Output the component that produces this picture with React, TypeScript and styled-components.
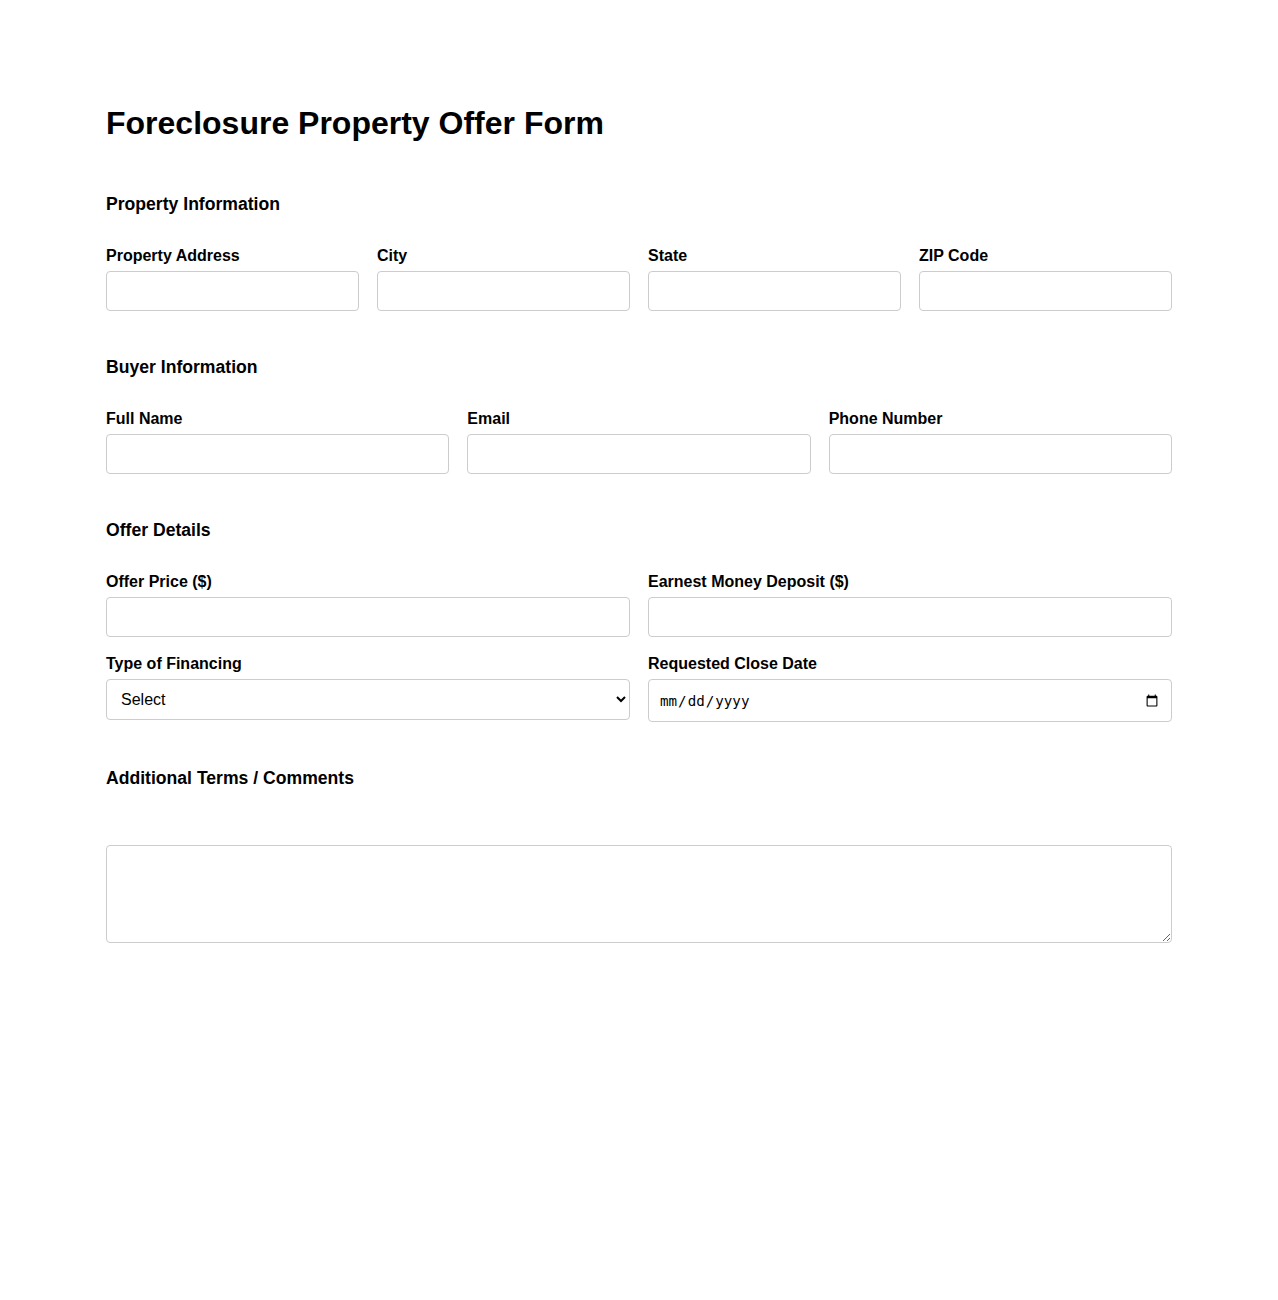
import React from "react";
import styled, { createGlobalStyle } from "styled-components";

const GlobalStyle = createGlobalStyle`
  html, body {
    margin: 0;
    padding: 0;
    background: #ffffff;
  }
  body {
    font-family: "Liberation Sans", Arial, sans-serif;
    color: #000000;
  }
  * {
    box-sizing: border-box;
  }
`;

const Page = styled.main`
  width: 1066px;
  margin: 0 auto;
  padding: 105px 0 120px;
`;

const Title = styled.h1`
  margin: 0 0 52px;
  font-size: 32px;
  line-height: 37px;
  font-weight: 700;
`;

const Section = styled.section`
  margin-bottom: 46px;
`;

const SectionTitle = styled.h2`
  margin: 0 0 32px;
  font-size: 17.6px;
  line-height: 21px;
  font-weight: 700;
`;

const Grid = styled.div<{ $cols: number }>`
  display: grid;
  grid-template-columns: repeat(${(p) => p.$cols}, minmax(0, 1fr));
  column-gap: 18px;
  row-gap: 18px;
`;

const Field = styled.div`
  display: flex;
  flex-direction: column;
  gap: 6px;
`;

const Label = styled.label`
  display: block;
  min-height: 18px;
  font-size: 16px;
  line-height: 18px;
  font-weight: 700;
`;

const fieldBase = `
  width: 100%;
  border: 1px solid #cccccc;
  border-radius: 4px;
  background: #ffffff;
  color: #000000;
  padding: 10px;
  font-family: "Liberation Sans", Arial, sans-serif;
  font-size: 16px;
  margin: 0;
  outline: none;
`;

const TextInput = styled.input`
  ${fieldBase}
  height: 40px;
`;

const Select = styled.select`
  ${fieldBase}
  height: 41px;
`;

const DateInput = styled.input`
  ${fieldBase}
  height: 43px;
  padding-top: 11px;
  font-family: "DejaVu Sans Mono", monospace;
  font-size: 14.2px;
`;

const TextArea = styled.textarea`
  ${fieldBase}
  display: block;
  height: 98px;
  resize: vertical;
`;

type FieldDef = { label: string; type?: string };

const propertyFields: FieldDef[] = [
  { label: "Property Address" },
  { label: "City" },
  { label: "State" },
  { label: "ZIP Code" },
];

const buyerFields: FieldDef[] = [
  { label: "Full Name" },
  { label: "Email", type: "email" },
  { label: "Phone Number", type: "tel" },
];

function TextField({ label, type = "text" }: FieldDef) {
  const id = label.toLowerCase().replace(/[^a-z]+/g, "-");
  return (
    <Field>
      <Label htmlFor={id}>{label}</Label>
      <TextInput id={id} type={type} />
    </Field>
  );
}

export default function App() {
  return (
    <>
      <GlobalStyle />
      <Page>
        <Title>Foreclosure Property Offer Form</Title>

        <Section>
          <SectionTitle>Property Information</SectionTitle>
          <Grid $cols={4}>
            {propertyFields.map((f) => (
              <TextField key={f.label} {...f} />
            ))}
          </Grid>
        </Section>

        <Section>
          <SectionTitle>Buyer Information</SectionTitle>
          <Grid $cols={3}>
            {buyerFields.map((f) => (
              <TextField key={f.label} {...f} />
            ))}
          </Grid>
        </Section>

        <Section>
          <SectionTitle>Offer Details</SectionTitle>
          <Grid $cols={2}>
            <TextField label="Offer Price ($)" type="number" />
            <TextField label="Earnest Money Deposit ($)" type="number" />
            <Field>
              <Label htmlFor="financing">Type of Financing</Label>
              <Select id="financing" defaultValue="">
                <option value="">Select</option>
                <option value="cash">Cash</option>
                <option value="conventional">Conventional Loan</option>
                <option value="fha">FHA Loan</option>
                <option value="va">VA Loan</option>
                <option value="hard-money">Hard Money</option>
              </Select>
            </Field>
            <Field>
              <Label htmlFor="close-date">Requested Close Date</Label>
              <DateInput id="close-date" type="date" />
            </Field>
          </Grid>
        </Section>

        <Section>
          <SectionTitle>Additional Terms / Comments</SectionTitle>
          <Field>
            <Label htmlFor="comments" />
            <TextArea id="comments" />
          </Field>
        </Section>
      </Page>
    </>
  );
}
